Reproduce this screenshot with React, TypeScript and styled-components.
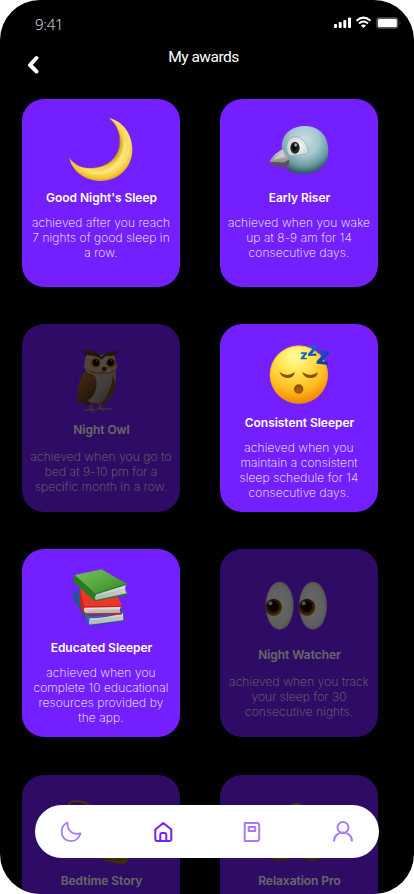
import React from "react";
import styled, { createGlobalStyle } from "styled-components";

const GlobalStyle = createGlobalStyle`
  * { box-sizing: border-box; }
  body { margin: 0; background: #fff; }
  h1, h2, p { margin: 0; }
  button { border: 0; padding: 0; background: none; }
  svg { display: block; }
`;

const Screen = styled.main`
  position: relative;
  width: 414px;
  height: 894px;
  overflow: hidden;
  border-radius: 40px;
  background: #000;
  color: #fff;
  font-family: Inter, "Liberation Sans", sans-serif;
`;

const StatusBar = styled.div`
  display: flex;
  justify-content: space-between;
  height: 46px;
  padding: 14px 12px 0 35px;
`;

const Clock = styled.span`
  font: 300 15px/20px "Open Sans", sans-serif;
  letter-spacing: -0.2px;
  color: #e4e4e4;
`;

const StatusIcons = styled.div`
  padding-top: 2px;
`;

const Header = styled.header`
  display: grid;
  grid-template-columns: 60px 1fr 60px;
  height: 53px;
`;

const BackButton = styled.button`
  display: flex;
  align-items: flex-start;
  padding: 9px 0 0 27px;
`;

const PageTitle = styled.h1`
  padding-right: 7px;
  text-align: center;
  font: 400 15.5px/22px Roboto, sans-serif;
  letter-spacing: -0.5px;
`;

const AwardGrid = styled.section`
  display: grid;
  grid-template-columns: 158px 158px;
  grid-template-rows: 188px 188px 189px 188px;
  gap: 37px 40px;
  padding-left: 22px;
`;

const Card = styled.article<{ $locked?: boolean }>`
  height: 188px;
  border-radius: 22px;
  background: #731fff;
  opacity: ${(p) => (p.$locked ? 0.4 : 1)};
  text-align: center;
`;

const Art = styled.svg<{ $locked?: boolean }>`
  width: 158px;
  height: 90px;
  margin-bottom: ${(p) => (p.$locked ? 8 : 1)}px;
`;

const CardTitle = styled.h2<{ $locked?: boolean }>`
  font-size: 12px;
  line-height: 15px;
  font-weight: 600;
  letter-spacing: -0.04px;
  padding-left: 1px;
  margin-bottom: ${(p) => (p.$locked ? 12 : 10)}px;
`;

const Description = styled.p`
  font-size: 12px;
  line-height: 15px;
  font-weight: 200;
  letter-spacing: 0.1px;
  white-space: pre-line;
`;

const TabBar = styled.nav`
  position: absolute;
  left: 35px;
  top: 805px;
  width: 344px;
  height: 53px;
  padding: 0 24px;
  display: flex;
  align-items: center;
  justify-content: space-between;
  border-radius: 27px;
  background: #fff;
`;

const Tab = styled.button<{ $active?: boolean }>`
  color: ${(p) => (p.$active ? "#731fff" : "#ab79ff")};
`;

const MoonArt = () => (
  <>
    <defs>
      <radialGradient id="moon" gradientUnits="userSpaceOnUse" cx="252" cy="150" r="112">
        <stop offset=".48" stopColor="#b98516" />
        <stop offset=".63" stopColor="#f5d24d" />
        <stop offset=".78" stopColor="#fbe06d" />
        <stop offset=".92" stopColor="#f2c52f" />
        <stop offset="1" stopColor="#d79a21" />
      </radialGradient>
    </defs>
    <path d="M279 72C324 82 349 124 349 166C349 220 309 261 255 261C207 261 169 233 160 192C180 218 203 224 232 222C283 218 315 181 311 132C309 107 298 88 279 72Z" fill="url(#moon)" />
    <path d="M279 72C298 88 309 107 311 132C315 181 283 218 232 222C203 224 180 218 160 192" fill="none" stroke="#a96b13" strokeWidth="2" opacity=".7" />
    <path d="M322 111Q337 165 294 213Q257 244 211 235Q259 251 300 221Q347 177 322 111" fill="#fff09a" opacity=".55" />
  </>
);

const BirdArt = () => (
  <>
    <defs>
      <radialGradient id="bird" cx=".48" cy=".3" r=".68">
        <stop offset="0" stopColor="#c8dfe8" />
        <stop offset=".48" stopColor="#a4c6ce" />
        <stop offset=".8" stopColor="#66999f" />
        <stop offset="1" stopColor="#345967" />
      </radialGradient>
      <linearGradient id="beak" x2="0" y2="1">
        <stop stopColor="#d3d0d2" />
        <stop offset="1" stopColor="#77747b" />
      </linearGradient>
      <radialGradient id="birdPatch">
        <stop stopColor="#fff" />
        <stop offset="1" stopColor="#d1d5d5" />
      </radialGradient>
    </defs>
    <path d="M204 165C199 124 230 96 272 96C316 96 343 126 343 169C343 213 315 240 270 240C244 240 226 234 216 219Q204 194 204 165Z" fill="url(#bird)" />
    <path d="M221 177C213 149 224 128 246 128C266 128 278 149 284 170C281 184 259 181 242 184Q226 188 221 177Z" fill="url(#birdPatch)" stroke="#8da9ad" strokeWidth="2" />
    <ellipse cx="243" cy="161" rx="14" ry="18" fill="#242524" />
    <ellipse cx="241" cy="160" rx="7" ry="10" fill="#060b0e" />
    <ellipse cx="245" cy="153" rx="4" ry="5" fill="#aeb4b3" />
    <path d="M206 166C187 175 171 191 166 205C180 219 201 220 219 218Q231 206 222 189Q210 176 206 166Z" fill="url(#beak)" />
    <path d="M166 204Q187 203 209 206L225 197Q229 211 217 219Q181 223 166 204Z" fill="#555158" />
    <path d="M178 197Q196 177 205 174L214 190Z" fill="#deddde" opacity=".6" />
  </>
);

const OwlArt = () => (
  <>
    <defs>
      <linearGradient id="wing" x2=".6" y2="1">
        <stop stopColor="#a8682f" />
        <stop offset=".5" stopColor="#8c5628" />
        <stop offset="1" stopColor="#513018" />
      </linearGradient>
      <linearGradient id="breast" x2="1" y2="1">
        <stop stopColor="#b8aca5" />
        <stop offset=".6" stopColor="#a3958d" />
        <stop offset="1" stopColor="#574031" />
      </linearGradient>
    </defs>
    <path d="M225 255V274M252 254V272" stroke="#96743a" strokeWidth="8" />
    <path d="M205 276L229 273L240 278M224 276L230 284M244 272L266 272L286 274M252 272L263 279" fill="none" stroke="#9b8358" strokeWidth="4" strokeLinecap="round" />
    <path d="M205 250L201 263L222 260L275 254L273 247Z" fill="#5f371b" />
    <path d="M211 158C198 199 203 239 225 255C265 262 285 241 294 215Q303 186 299 158Z" fill="url(#breast)" />
    <path d="M290 172Q302 194 295 217Q282 244 258 255Q289 218 290 172Z" fill="#754721" />
    <path d="M207 160C182 188 184 230 184 254Q193 258 203 251C228 247 245 221 241 187Q237 163 207 160Z" fill="url(#wing)" />
    <path d="M207 126C208 105 230 101 255 111C284 99 300 107 299 132Q309 153 293 165Q257 178 219 166Q199 157 207 126Z" fill="#c6a98d" />
    <path d="M197 97C222 97 245 100 257 117C267 100 286 101 312 99Q297 117 275 113Q263 114 257 125Q242 111 207 111L197 97Z" fill="#5a3520" />
    <path d="M213 113Q233 115 252 132Q260 122 278 117L266 145H249Z" fill="#c8b6a9" />
    <path d="M210 151Q232 166 259 160Q281 168 301 149Q295 172 255 168Q221 170 210 151Z" fill="#a3744b" />
    <circle cx="239" cy="135" r="15" fill="#bc761e" />
    <circle cx="285" cy="135" r="15" fill="#bc761e" />
    <circle cx="240" cy="134" r="10" fill="#080402" />
    <circle cx="284" cy="134" r="10" fill="#080402" />
    <circle cx="243" cy="129" r="2.5" fill="#bbb" />
    <circle cx="287" cy="129" r="2.5" fill="#bbb" />
    <path d="M258 149Q265 143 272 150Q273 158 265 160Q257 158 258 149Z" fill="#382925" />
  </>
);

const SleepArt = () => (
  <>
    <defs>
      <radialGradient id="face" cx=".43" cy=".18" r=".85">
        <stop stopColor="#fffda0" />
        <stop offset=".3" stopColor="#ffe85a" />
        <stop offset=".68" stopColor="#ffbd20" />
        <stop offset="1" stopColor="#ed8000" />
      </radialGradient>
      <linearGradient id="zed" x2="1" y2="1">
        <stop stopColor="#237bd1" />
        <stop offset="1" stopColor="#0a30a2" />
      </linearGradient>
    </defs>
    <circle cx="254.500" cy="170" r="87.500" fill="url(#face)" />
    <circle cx="254.500" cy="170" r="86" fill="none" stroke="#f08c08" strokeWidth="3" opacity=".5" />
    <path d="M196 162Q220 180 242 162Q240 180 220 180Q202 179 196 162ZM265 162Q289 180 312 162Q309 180 290 180Q270 180 265 162Z" fill="#8c4c00" />
    <ellipse cx="254" cy="213" rx="14" ry="14" fill="#8d4b00" />
    <ellipse cx="254" cy="216" rx="9" ry="9" fill="#a75c09" />
    <path d="M261 103H279V107L269 119H278V124H260V120L270 108H261ZM287 83L310 81V88L294 108L307 106V113L282 114V107L298 89L286 90ZM313 97L345 98V106L324 130L343 132L341 140L308 137V130L330 106L310 105Z" fill="url(#zed)" />
  </>
);

const BooksArt = () => (
  <>
    <defs>
      <linearGradient id="green" x2="1" y2="1">
        <stop stopColor="#75bd61" />
        <stop offset=".5" stopColor="#58a741" />
        <stop offset="1" stopColor="#298321" />
      </linearGradient>
      <linearGradient id="pages" x2=".2" y2="1">
        <stop stopColor="#f1f2f0" />
        <stop offset="1" stopColor="#a9afb0" />
      </linearGradient>
    </defs>
    <path d="M172 143L195 145L325 204L321 236L221 249L209 235L170 166Z" fill="#294f9d" />
    <path d="M218 224Q267 223 321 209L322 232L221 245Q214 234 218 224Z" fill="url(#pages)" />
    <path d="M207 215L228 220Q278 217 327 203L323 211Q269 226 221 226L218 242L209 233Z" fill="#315fb6" />
    <path d="M192 136L299 146L318 188L199 195Z" fill="#eb3629" />
    <path d="M192 137L204 190L318 188V194L208 195Q201 207 213 210L317 210V215H205Q194 203 192 174Z" fill="#ca211b" />
    <path d="M206 194L314 192Q309 201 313 210L209 211Q200 203 206 194Z" fill="url(#pages)" />
    <path d="M176 96L256 79L334 123L239 155Z" fill="url(#green)" />
    <path d="M176 95L239 151L332 122V129L242 158V169L336 151V156L237 175L174 119Q170 104 176 95Z" fill="#267d20" />
    <path d="M242 154L329 127Q325 142 333 151L239 171Q234 161 242 154Z" fill="url(#pages)" />
    <path d="M245 161L327 138M213 201H309M221 235L319 222" stroke="#969b9b" strokeWidth="1.500" opacity=".6" />
    <path d="M181 99L240 151" stroke="#70ad52" strokeWidth="2" />
  </>
);

const EyesArt = () => (
  <>
    <defs>
      <radialGradient id="eyeWhite" cx=".48" cy=".5" r=".58">
        <stop stopColor="#fff" />
        <stop offset=".72" stopColor="#eee" />
        <stop offset="1" stopColor="#a7a7a7" />
      </radialGradient>
      <radialGradient id="iris" cx=".45" cy=".4" r=".6">
        <stop offset=".35" stopColor="#260c00" />
        <stop offset=".75" stopColor="#8a4a04" />
        <stop offset="1" stopColor="#d08a10" />
      </radialGradient>
    </defs>
    {[0, 100].map((x) => (
      <g key={x} transform={`translate(${x} 0)`}>
        <ellipse cx="197" cy="188" rx="42" ry="72" fill="url(#eyeWhite)" />
        <ellipse cx="179" cy="193" rx="25" ry="26" fill="url(#iris)" />
        <circle cx="178" cy="191" r="16" fill="#180600" />
        <circle cx="169" cy="181" r="6" fill="#d0d0cf" />
      </g>
    ))}
  </>
);

const StoryArt = () => (
  <>
    <path d="M158 108C164 89 202 96 222 109L292 200" fill="none" stroke="#b87912" strokeWidth="6" />
    <path d="M217 250L222 269L229 250Z" fill="#a06a14" />
    <path d="M220 246L247 265C272 280 312 288 328 282Q337 278 335 265L312 230Z" fill="#a9700e" />
    <path d="M255 266Q292 280 328 270" fill="none" stroke="#8a580c" strokeWidth="4" />
  </>
);

const RelaxArt = () => (
  <>
    <ellipse cx="248" cy="119" rx="23" ry="18" fill="#a88a68" />
    <path d="M228 136H268L288 240L323 266C320 277 276 277 263 266L248 250L233 266C218 277 175 277 168 266L208 240Z" fill="#b0740d" />
    <path d="M172 269Q205 278 230 268M266 268Q291 278 319 269" fill="none" stroke="#805010" strokeWidth="4" />
  </>
);

type Award = {
  title: string;
  text: string;
  art: React.ReactNode;
  locked?: boolean;
};

const awards: Award[] = [
  { title: "Good Night's Sleep", text: "achieved after you reach\n7 nights of good sleep in\na row.", art: <g transform="translate(0 3)"><MoonArt /></g> },
  { title: "Early Riser", text: "achieved when you wake\nup at 8-9 am for 14\nconsecutive days.", art: <g transform="translate(0 3)"><BirdArt /></g> },
  { title: "Night Owl", text: "achieved when you go to\nbed at 9-10 pm for a\nspecific month in a row.", art: <OwlArt />, locked: true },
  { title: "Consistent Sleeper", text: "achieved when you\nmaintain a consistent\nsleep schedule for 14\nconsecutive days.", art: <SleepArt /> },
  { title: "Educated Sleeper", text: "achieved when you\ncomplete 10 educational\nresources provided by\nthe app.", art: <BooksArt /> },
  { title: "Night Watcher", text: "achieved when you track\nyour sleep for 30\nconsecutive nights.", art: <EyesArt />, locked: true },
  { title: "Bedtime Story", text: "", art: <StoryArt />, locked: true },
  { title: "Relaxation Pro", text: "", art: <RelaxArt />, locked: true },
];

const SystemIcons = () => (
  <svg width="68" height="15" viewBox="0 0 68 15" fill="none">
    <g fill="#fff">
      <rect x="0" y="8" width="3" height="4" rx="1" />
      <rect x="4.700" y="6" width="3" height="6" rx="1" />
      <rect x="9.300" y="4" width="3" height="8" rx="1" />
      <rect x="14" y="1.500" width="3" height="10.500" rx="1" />
    </g>
    <path d="M22.500 4.800Q29.500 -1.500 36.500 4.800M25 7.500Q29.500 3.600 34 7.500" stroke="#fff" strokeWidth="2" />
    <path d="M27 9.400Q29.500 7.600 32 9.400L29.500 12Z" fill="#fff" />
    <rect x="42.300" y="1.300" width="22" height="11.400" rx="3" fill="#555" />
    <rect x="44" y="3" width="18.800" height="8" rx="1.500" fill="#fff" />
    <path d="M65.500 5V9Q67.500 7 65.500 5Z" fill="#555" />
  </svg>
);

export default function App() {
  return (
    <>
      <GlobalStyle />
      <Screen>
        <StatusBar>
          <Clock>9:41</Clock>
          <StatusIcons><SystemIcons /></StatusIcons>
        </StatusBar>
        <Header>
          <BackButton aria-label="Back">
            <svg width="14" height="20" viewBox="0 0 14 20" fill="none" stroke="#fff" strokeWidth="4" strokeLinecap="round" strokeLinejoin="round">
              <path d="M9.500 3L3 10L9.500 16.500" />
            </svg>
          </BackButton>
          <PageTitle>My awards</PageTitle>
        </Header>
        <AwardGrid>
          {awards.map((a) => (
            <Card key={a.title} $locked={a.locked}>
              <Art viewBox="18 18 474 270" $locked={a.locked}>{a.art}</Art>
              <CardTitle $locked={a.locked}>{a.title}</CardTitle>
              <Description>{a.text}</Description>
            </Card>
          ))}
        </AwardGrid>
        <TabBar>
          <Tab aria-label="Sleep">
            <svg width="24" height="24" viewBox="0 0 24 24" fill="none" stroke="currentColor" strokeWidth="1.800" strokeLinejoin="round">
              <path d="M8.500 2.500C8 10 13 15.500 21.500 13.500C19.600 19 15.500 21.200 11.500 21.200C6.300 21.200 2.700 17 2.700 12C2.700 7.400 5 4 8.500 2.500Z" />
            </svg>
          </Tab>
          <Tab aria-label="Home" $active>
            <svg width="24" height="24" viewBox="-1.300 0 24 24" fill="none" stroke="currentColor" strokeWidth="2" strokeLinejoin="round">
              <path d="M4 9.500L12 3L20 9.500V19Q20 21 18 21H6Q4 21 4 19ZM9 21V15Q9 13 11 13H13Q15 13 15 15V21" />
            </svg>
          </Tab>
          <Tab aria-label="Journal">
            <svg width="24" height="24" viewBox="0.300 0 24 24" fill="none" stroke="currentColor" strokeWidth="2" strokeLinejoin="round">
              <path d="M5 3H18L19.500 4.500V19.500L18 21H5ZM9 7H15.500V11H9Z" />
            </svg>
          </Tab>
          <Tab aria-label="Profile">
            <svg width="24" height="24" viewBox="0 0 24 24" fill="none" stroke="currentColor" strokeWidth="2">
              <circle cx="12" cy="7.500" r="5.500" />
              <path d="M3 21.500C3 9.500 21 9.500 21 21.500" />
            </svg>
          </Tab>
        </TabBar>
      </Screen>
    </>
  );
}
